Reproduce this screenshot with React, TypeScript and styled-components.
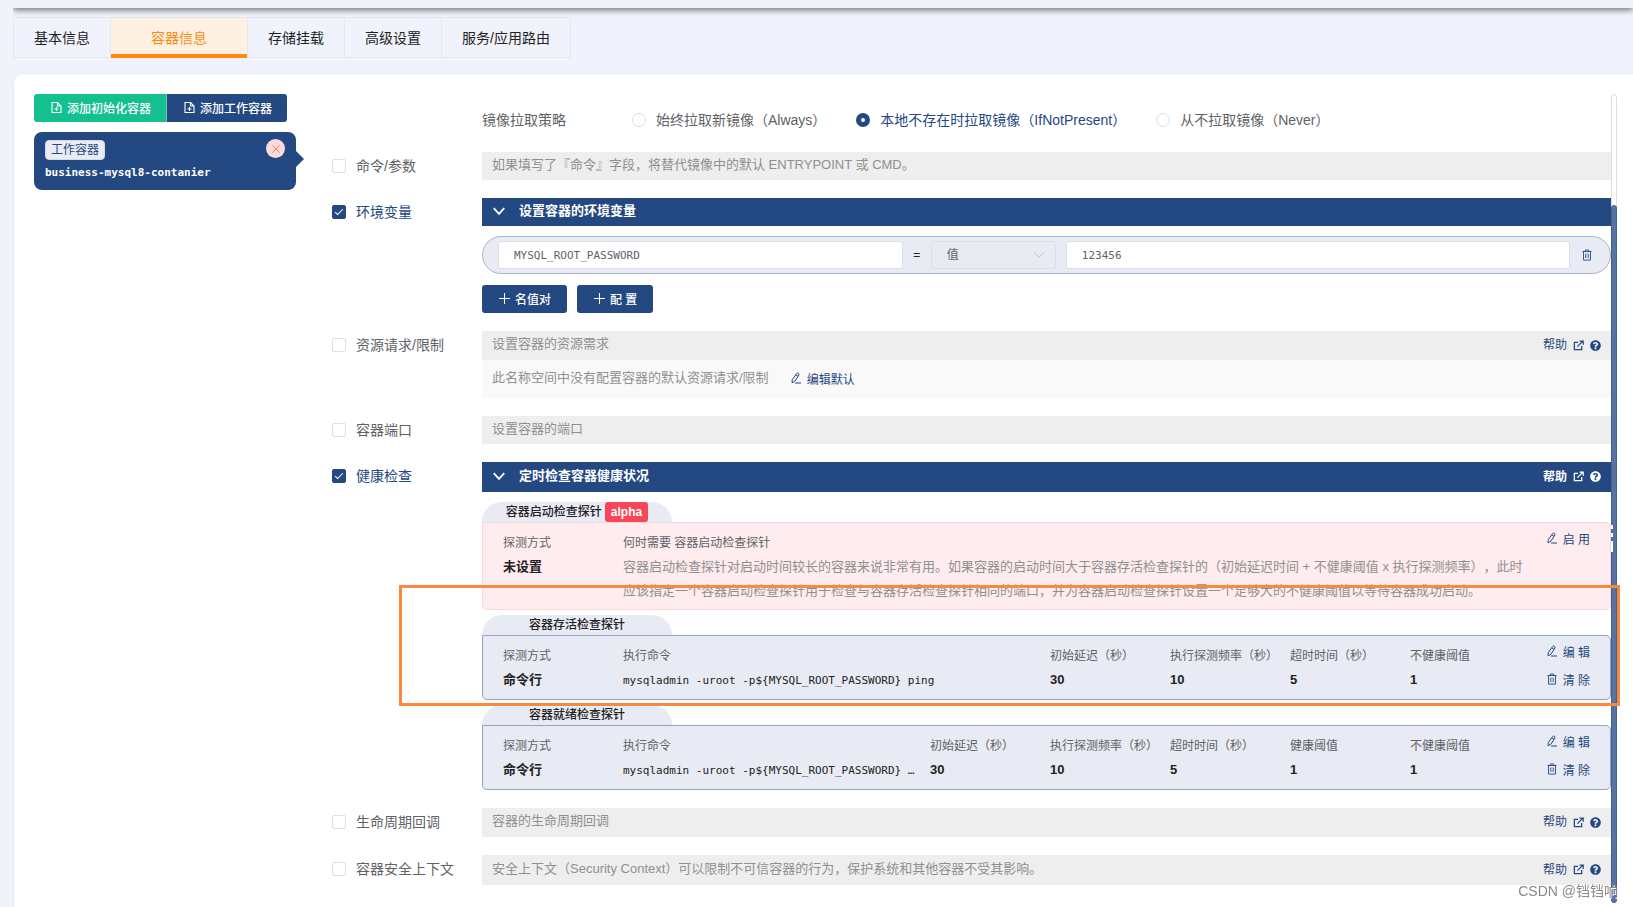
import React from "react";
import styled, { createGlobalStyle, css } from "styled-components";
import { FaQuestionCircle } from "react-icons/fa";

const navy = "#244882";
const mono = `"DejaVu Sans Mono", "Liberation Mono", monospace`;
const sans = `"Liberation Sans", "Noto Sans CJK SC", sans-serif`;

const Global = createGlobalStyle`
  *, *::before, *::after { box-sizing: border-box; }
  body {
    margin: 0;
    background: #f0f3fb;
    color: #606266;
    font: 14px/20px ${sans};
    text-spacing-trim: space-all;
  }
  button, input, select { font-family: inherit; margin: 0; }
  button { cursor: pointer; }
`;

const Page = styled.div`
  display: flex;
  flex-direction: column;
  min-height: 100vh;
  padding-left: 13px;
  overflow: hidden;
`;

const HeaderEdge = styled.header`
  flex: none;
  height: 8px;
  margin-bottom: 9px;
  box-shadow: 0 2px 6px rgba(0, 0, 0, 0.55);
  clip-path: inset(0 0 -9px 0);
`;

const TabBar = styled.nav`
  display: flex;
  align-self: flex-start;
  flex: none;
  height: 41px;
  margin-bottom: 15px;
  border: 1px solid #e4e7ed;
  border-radius: 4px 4px 0 0;
`;

const Tab = styled.button<{ $active?: boolean }>`
  padding: 2px 20px 0;
  border: 0;
  border-right: 1px solid #e4e7ed;
  background: none;
  color: #222;
  font-size: 14px;
  line-height: 37px;
  &:last-child { border-right: 0; }
  ${(p) => p.$active && css`
    margin-bottom: -1px;
    padding: 1px 40px 0;
    background: #fff1e2;
    box-shadow: inset 0 -4px 0 #ff8a0f;
    color: #ff8a0f;
  `}
`;

const Panel = styled.main`
  display: flex;
  flex: 1;
  padding: 20px 16px 4px 20px;
  border: solid #e6eaf2;
  border-width: 1px 0 0 1px;
  border-top-left-radius: 10px;
  background: #fff;
`;

const Sidebar = styled.aside`
  flex: none;
  width: 262px;
  margin-right: 36px;
`;

const ButtonGroup = styled.div<{ $gap?: number }>`
  display: flex;
  gap: ${(p) => p.$gap ?? 0}px;
  margin-bottom: ${(p) => (p.$gap ? 0 : 10)}px;
`;

const Button = styled.button<{ $green?: boolean }>`
  display: flex;
  align-items: center;
  gap: 5px;
  height: 28px;
  padding: 0 16px 2px;
  border: 0;
  border-radius: 3px;
  background: ${(p) => (p.$green ? "#13c08f" : navy)};
  color: #fff;
  font-size: 12px;
  font-weight: 500;
  white-space: nowrap;
`;

const JoinedButton = styled(Button)`
  &:first-child { border-radius: 3px 0 0 3px; box-shadow: inset -1px 0 0 #7fbcc0; }
  &:last-child { border-radius: 0 3px 3px 0; padding-right: 15px; }
`;

const ContainerCard = styled.section`
  position: relative;
  height: 58px;
  padding: 8px 11px;
  border-radius: 8px;
  background: ${navy};
  color: #fff;
  &::after {
    content: "";
    position: absolute;
    top: 19px;
    left: 100%;
    border: 8px solid transparent;
    border-left-color: ${navy};
    border-right: 0;
  }
`;

const CardTop = styled.div`
  display: flex;
  justify-content: space-between;
  height: 20px;
`;

const Tag = styled.span`
  padding: 0 5px;
  border: 1px solid #d3dae6;
  border-radius: 4px;
  background: #e9ecf3;
  color: ${navy};
  font-size: 12px;
  line-height: 18px;
`;

const RemoveButton = styled.button`
  display: grid;
  place-items: center;
  width: 19px;
  height: 19px;
  margin-top: -1px;
  padding: 0;
  border: 0;
  border-radius: 50%;
  background: #fddada;
  color: #f56c6c;
`;

const ContainerName = styled.div`
  padding-top: 3px;
  font: bold 11px/20px ${mono};
`;

const Form = styled.form`
  display: flex;
  flex: 1;
  flex-direction: column;
  gap: 18px;
  min-width: 0;
`;

const PolicyRow = styled.div`
  display: flex;
  align-items: center;
  height: 40px;
  padding: 12px 0 0 150px;
`;

const PolicyLabel = styled.span`
  width: 150px;
`;

const RadioLabel = styled.label<{ $on?: boolean }>`
  display: flex;
  align-items: center;
  gap: 10px;
  margin-right: 30px;
  color: ${(p) => (p.$on ? navy : "#606266")};
  white-space: nowrap;
`;

const Radio = styled.input`
  appearance: none;
  width: 14px;
  height: 14px;
  margin: 0;
  border: 1px solid #dcdfe6;
  border-radius: 50%;
  background: #fff;
  &:checked { border: 5px solid ${navy}; }
`;

const Row = styled.div`
  display: flex;
`;

const CheckLabel = styled.label<{ $on?: boolean }>`
  display: flex;
  flex: none;
  align-items: center;
  gap: 10px;
  width: 150px;
  height: 28px;
  color: ${(p) => (p.$on ? navy : "#606266")};
`;

const Checkbox = styled.input`
  appearance: none;
  width: 14px;
  height: 14px;
  margin: 0;
  border: 1px solid #dcdfe6;
  border-radius: 2px;
  background: #fff;
  &:checked {
    border-color: ${navy};
    background: ${navy};
  }
  &:checked::after {
    content: "";
    display: block;
    width: 4px;
    height: 8px;
    margin: 1px 0 0 4px;
    border: solid #fff;
    border-width: 0 1px 1px 0;
    transform: rotate(45deg);
  }
`;

const Content = styled.div`
  flex: 1;
  min-width: 0;
`;

const Bar = styled.div<{ $open?: boolean; $h?: number }>`
  display: flex;
  align-items: center;
  height: ${(p) => p.$h ?? 28}px;
  padding: 0 10px 3px;
  background: ${(p) => (p.$open ? navy : "#eeeeee")};
  color: ${(p) => (p.$open ? "#fff" : "#909090")};
  font-size: 13px;
  font-weight: ${(p) => (p.$open ? "bold" : "normal")};
`;

const BarTitle = styled.span`
  flex: 1;
`;

const FoldIcon = styled.span`
  display: flex;
  width: 27px;
`;

const HelpLink = styled.a<{ $light?: boolean }>`
  display: flex;
  align-items: center;
  gap: 6px;
  padding-top: 2px;
  color: ${(p) => (p.$light ? "#fff" : navy)};
  font-size: 12px;
  text-decoration: none;
`;

const EnvRow = styled.div`
  display: flex;
  align-items: center;
  height: 38px;
  margin: 10px 0 11px;
  padding: 0 17px 0 15px;
  border: 1px solid #a4b6cd;
  border-radius: 19px;
  background: #e8ebf3;
  color: #222;
  font-size: 12px;
`;

const TextInput = styled.input<{ $grow: number }>`
  flex: ${(p) => p.$grow} 1 0;
  min-width: 0;
  height: 28px;
  padding: 0 15px;
  border: 1px solid #dcdfe6;
  border-radius: 3px;
  background: #fff;
  color: #606266;
  font: 11px/26px ${mono};
`;

const Equals = styled.span`
  width: 28px;
  text-align: center;
`;

const SelectBox = styled.div`
  position: relative;
  width: 125px;
  margin-right: 10px;
  color: #c0c4cc;
`;

const Select = styled.select`
  appearance: none;
  display: block;
  width: 100%;
  height: 28px;
  padding: 0 15px;
  border: 1px solid #dcdfe6;
  border-radius: 3px;
  background: transparent;
  color: #606266;
  font-size: 12px;
  opacity: 1;
`;

const SelectArrow = styled.span`
  position: absolute;
  top: 8px;
  right: 11px;
  display: flex;
  pointer-events: none;
`;

const LinkButton = styled.button`
  display: flex;
  align-items: center;
  gap: 5px;
  height: 28px;
  padding: 0;
  border: 0;
  background: none;
  color: ${navy};
  font-size: 12px;
  white-space: nowrap;
`;

const TrashButton = styled(LinkButton)`
  margin-left: 11px;
`;

const DefaultNote = styled.div`
  display: flex;
  align-items: center;
  gap: 21px;
  height: 38px;
  padding: 0 10px 2px;
  background: #f9f9f9;
  color: #909090;
  font-size: 13px;
`;

const Probes = styled.div`
  display: flex;
  flex-direction: column;
  gap: 5px;
  padding-top: 10px;
`;

const Probe = styled.section`
  position: relative;
`;

const ProbeTitle = styled.h3`
  display: flex;
  align-items: center;
  justify-content: center;
  gap: 3px;
  width: 190px;
  height: 20px;
  margin: 0;
  border-radius: 20px 20px 0 0;
  background: #e8ebf3;
  color: #222;
  font-size: 12px;
  font-weight: 500;
`;

const Alpha = styled.span`
  padding: 0 6px;
  border-radius: 3px;
  background: #f74657;
  color: #fff;
  font-weight: bold;
  line-height: 20px;
`;

const ProbeBox = styled.div<{ $unset?: boolean }>`
  display: flex;
  align-items: flex-start;
  padding: 0 20px 6px;
  border: 1px solid ${(p) => (p.$unset ? "#fcd5d8" : "#8fa5c4")};
  border-radius: 0 5px 5px 5px;
  background: ${(p) => (p.$unset ? "#feecee" : "#e8ebf3")};
`;

const ProbeTable = styled.table`
  flex: 1;
  min-width: 0;
  margin-top: 8px;
  border-collapse: collapse;
  table-layout: fixed;
  width: 100%;
  th, td {
    padding: 0;
    color: #222;
    font-size: 13px;
    font-weight: bold;
    line-height: 24px;
    text-align: left;
    vertical-align: top;
    white-space: nowrap;
  }
  th {
    color: #606266;
    font-size: 12px;
    font-weight: normal;
  }
`;

const CommandCell = styled.td`
  && {
    padding: 2px 10px 0 0;
    overflow: hidden;
    font: 11px/22px ${mono};
    text-overflow: ellipsis;
  }
`;

const NoteCell = styled.td`
  && {
    color: #909090;
    font-weight: normal;
    white-space: normal;
  }
`;

const Col = styled.col<{ $w?: number }>`
  width: ${(p) => (p.$w ? `${p.$w}px` : "auto")};
`;

const Actions = styled.div`
  display: flex;
  flex: none;
  flex-direction: column;
  align-items: flex-end;
  width: 60px;
  padding-top: 1px;
`;

const Highlight = styled.div`
  position: absolute;
  z-index: 2;
  inset: -30px -9px -6px -83px;
  border: 3px solid #fa8a3b;
  pointer-events: none;
`;

const EdgeMarks = styled.div`
  position: absolute;
  z-index: 1;
  top: 23px;
  right: -2px;
  display: flex;
  flex-direction: column;
  gap: 4px;
  width: 2px;
`;

const EdgeMark = styled.i<{ $h: number }>`
  height: ${(p) => p.$h}px;
  background: #fff;
`;

const ScrollTrack = styled.div`
  display: flex;
  flex: none;
  width: 6px;
  border: 1px solid #dedede;
  border-radius: 3px;
`;

const ScrollThumb = styled.div`
  flex: none;
  width: 6px;
  height: calc(87% - 4px);
  margin: auto -1px -1px;
  border: 1px solid #45618f;
  border-radius: 3px;
  background: #5873a1;
`;

const Watermark = styled.div`
  position: fixed;
  z-index: 3;
  right: 15px;
  bottom: 6px;
  color: #8a8a8a;
  font-size: 14px;
  text-shadow: 1px 1px 0 #fff;
`;

const Svg = ({ size = 12, width = 1, children }: { size?: number; width?: number; children: React.ReactNode }) => (
  <svg width={size} height={size} viewBox="0 0 12 12" fill="none" stroke="currentColor" strokeWidth={width} aria-hidden>
    {children}
  </svg>
);
const DocAdd = () => <Svg width={1.1}><path d="M7.5 1.5H2v10h9V5zM7.5 1.5V5H11M6.5 6v4M4.5 8h4" /></Svg>;
const Close = () => <Svg size={10}><path d="M1.5 1.5l9 9M10.5 1.5l-9 9" /></Svg>;
const Plus = () => <Svg><path d="M6.5 1v11M1 6.5h11" /></Svg>;
const Pen = () => <Svg><path d="M6.6 1.6q.8-1 1.8-.3t.5 1.7L4.9 9.2l-2.9 1.6.3-3.2zM5.8 2.9L8 4.3M5 11h6" /></Svg>;
const Trash = () => <Svg width={0.9}><path d="M1.5 2.5h9M4.3 2.5V1h3.4v1.5M2.5 2.5v8.6h7V2.5M4.8 4.5v4.6M7.2 4.5v4.6" /></Svg>;
const Down = ({ size = 12, width = 1 }) => <Svg size={size} width={width}><path d="M1.5 3.5l4.5 5 4.5-5" /></Svg>;
const External = () => (
  <Svg size={11} width={1.4}><path d="M5.5 2.5H1.5v8h8V6.5M4.8 7.2l5.4-5.4M7.2 1.3h3.9v3.9" /></Svg>
);

const Help = ({ light }: { light?: boolean }) => (
  <HelpLink href="#help" $light={light}>帮助 <External /><FaQuestionCircle size={11} /></HelpLink>
);

const Check = ({ children, on }: { children: React.ReactNode; on?: boolean }) => (
  <CheckLabel $on={on}><Checkbox type="checkbox" defaultChecked={on} />{children}</CheckLabel>
);

const ActionPair = () => (
  <Actions>
    <LinkButton type="button"><Pen />编 辑</LinkButton>
    <LinkButton type="button"><Trash />清 除</LinkButton>
  </Actions>
);

type ProbeProps = { title: string; command: string; fields: [string, string][]; marked?: boolean };

const CommandProbe = ({ title, command, fields, marked }: ProbeProps) => (
  <Probe>
    <ProbeTitle>{title}</ProbeTitle>
    <ProbeBox>
      <ProbeTable>
        <colgroup><Col $w={120} /><Col />{fields.map(([f]) => <Col key={f} $w={120} />)}</colgroup>
        <thead><tr><th>探测方式</th><th>执行命令</th>{fields.map(([f]) => <th key={f}>{f}</th>)}</tr></thead>
        <tbody><tr><td>命令行</td><CommandCell>{command}</CommandCell>{fields.map(([f, v]) => <td key={f}>{v}</td>)}</tr></tbody>
      </ProbeTable>
      <ActionPair />
    </ProbeBox>
    {marked && <Highlight />}
  </Probe>
);

const tabs = ["基本信息", "容器信息", "存储挂载", "高级设置", "服务/应用路由"];
const policies = ["始终拉取新镜像（Always）", "本地不存在时拉取镜像（IfNotPresent）", "从不拉取镜像（Never）"];

export default function App() {
  return (
    <Page>
      <Global />
      <HeaderEdge />
      <TabBar>{tabs.map((t, i) => <Tab key={t} type="button" $active={i === 1}>{t}</Tab>)}</TabBar>
      <Panel>
        <Sidebar>
          <ButtonGroup>
            <JoinedButton type="button" $green><DocAdd />添加初始化容器</JoinedButton>
            <JoinedButton type="button"><DocAdd />添加工作容器</JoinedButton>
          </ButtonGroup>
          <ContainerCard>
            <CardTop>
              <Tag>工作容器</Tag>
              <RemoveButton type="button" aria-label="删除"><Close /></RemoveButton>
            </CardTop>
            <ContainerName>business-mysql8-contanier</ContainerName>
          </ContainerCard>
        </Sidebar>

        <Form>
          <PolicyRow>
            <PolicyLabel>镜像拉取策略</PolicyLabel>
            {policies.map((p, i) => (
              <RadioLabel key={p} $on={i === 1}>
                <Radio type="radio" name="policy" defaultChecked={i === 1} />{p}
              </RadioLabel>
            ))}
          </PolicyRow>

          <Row>
            <Check>命令/参数</Check>
            <Content><Bar>如果填写了『命令』字段，将替代镜像中的默认 ENTRYPOINT 或 CMD。</Bar></Content>
          </Row>

          <Row>
            <Check on>环境变量</Check>
            <Content>
              <Bar $open><FoldIcon><Down size={14} width={1.5} /></FoldIcon><BarTitle>设置容器的环境变量</BarTitle></Bar>
              <EnvRow>
                <TextInput $grow={15} aria-label="名称" defaultValue="MYSQL_ROOT_PASSWORD" />
                <Equals>=</Equals>
                <SelectBox>
                  <Select aria-label="类型" disabled><option>值</option></Select>
                  <SelectArrow><Down /></SelectArrow>
                </SelectBox>
                <TextInput $grow={19} aria-label="值" defaultValue="123456" />
                <TrashButton type="button" aria-label="删除"><Trash /></TrashButton>
              </EnvRow>
              <ButtonGroup $gap={10}>
                <Button type="button"><Plus />名值对</Button>
                <Button type="button"><Plus />配 置</Button>
              </ButtonGroup>
            </Content>
          </Row>

          <Row>
            <Check>资源请求/限制</Check>
            <Content>
              <Bar $h={29}><BarTitle>设置容器的资源需求</BarTitle><Help /></Bar>
              <DefaultNote>此名称空间中没有配置容器的默认资源请求/限制<LinkButton type="button"><Pen />编辑默认</LinkButton></DefaultNote>
            </Content>
          </Row>

          <Row>
            <Check>容器端口</Check>
            <Content><Bar>设置容器的端口</Bar></Content>
          </Row>

          <Row>
            <Check on>健康检查</Check>
            <Content>
              <Bar $open $h={30}><FoldIcon><Down size={14} width={1.5} /></FoldIcon><BarTitle>定时检查容器健康状况</BarTitle><Help light /></Bar>
              <Probes>
                <Probe>
                  <ProbeTitle>容器启动检查探针<Alpha>alpha</Alpha></ProbeTitle>
                  <ProbeBox $unset>
                    <ProbeTable>
                      <colgroup><Col $w={120} /><Col /></colgroup>
                      <thead><tr><th>探测方式</th><th>何时需要 容器启动检查探针</th></tr></thead>
                      <tbody>
                        <tr>
                          <td>未设置</td>
                          <NoteCell>容器启动检查探针对启动时间较长的容器来说非常有用。如果容器的启动时间大于容器存活检查探针的（初始延迟时间 + 不健康阈值 x 执行探测频率），此时应该指定一个容器启动检查探针用于检查与容器存活检查探针相同的端口，并为容器启动检查探针设置一个足够大的不健康阈值以等待容器成功启动。</NoteCell>
                        </tr>
                      </tbody>
                    </ProbeTable>
                    <Actions><LinkButton type="button"><Pen />启 用</LinkButton></Actions>
                  </ProbeBox>
                  <EdgeMarks><EdgeMark $h={4} /><EdgeMark $h={4} /><EdgeMark $h={11} /></EdgeMarks>
                </Probe>
                <CommandProbe
                  marked
                  title="容器存活检查探针"
                  command="mysqladmin -uroot -p${MYSQL_ROOT_PASSWORD} ping"
                  fields={[["初始延迟（秒）", "30"], ["执行探测频率（秒）", "10"], ["超时时间（秒）", "5"], ["不健康阈值", "1"]]}
                />
                <CommandProbe
                  title="容器就绪检查探针"
                  command="mysqladmin -uroot -p${MYSQL_ROOT_PASSWORD} …"
                  fields={[["初始延迟（秒）", "30"], ["执行探测频率（秒）", "10"], ["超时时间（秒）", "5"], ["健康阈值", "1"], ["不健康阈值", "1"]]}
                />
              </Probes>
            </Content>
          </Row>

          <Row>
            <Check>生命周期回调</Check>
            <Content><Bar $h={29}><BarTitle>容器的生命周期回调</BarTitle><Help /></Bar></Content>
          </Row>

          <Row>
            <Check>容器安全上下文</Check>
            <Content>
              <Bar $h={30}><BarTitle>安全上下文（Security Context）可以限制不可信容器的行为，保护系统和其他容器不受其影响。</BarTitle><Help /></Bar>
            </Content>
          </Row>
        </Form>

        <ScrollTrack><ScrollThumb /></ScrollTrack>
      </Panel>
      <Watermark>CSDN @铛铛响</Watermark>
    </Page>
  );
}
